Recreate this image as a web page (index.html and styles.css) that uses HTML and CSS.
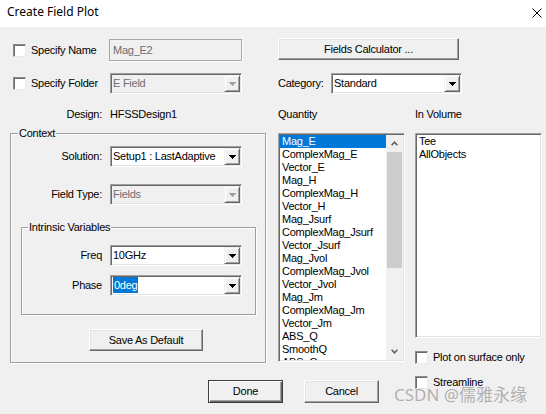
FILE: index.html
```html
<!DOCTYPE html>
<html>
<head>
<meta charset="utf-8">
<title>Create Field Plot</title>
<link rel="stylesheet" href="styles.css">
</head>
<body>
<div class="window">
  <div class="titlebar">
    <span class="title">Create Field Plot</span>
    <svg class="close" width="10" height="10" viewBox="0 0 10 10"><path d="M0.5 0.5L9.5 9.5M9.5 0.5L0.5 9.5" stroke="#000" stroke-width="1" fill="none"/></svg>
  </div>
  <div class="body">
    <div class="left">
      <div class="row r-name">
        <div class="chkwrap"><span class="chk"></span><span>Specify Name</span></div>
        <div class="edit is-disabled">Mag_E2</div>
      </div>
      <div class="row r-folder">
        <div class="chkwrap"><span class="chk"></span><span>Specify Folder</span></div>
        <div class="combo is-disabled"><span class="val">E Field</span><span class="drop"><svg width="7" height="4" viewBox="0 0 7 4"><path d="M0 0h7v1h-1v1h-1v1h-1v1h-1v-1h-1v-1h-1v-1h-1z"/></svg></span></div>
      </div>
      <div class="row r-design"><span class="lbl lw92">Design:</span><span>HFSSDesign1</span></div>
      <div class="group context">
        <div class="legend">Context</div>
        <div class="row r-solution"><span class="lbl lw91">Solution:</span>
          <div class="combo"><span class="val">Setup1 : LastAdaptive</span><span class="drop"><svg width="7" height="4" viewBox="0 0 7 4"><path d="M0 0h7v1h-1v1h-1v1h-1v1h-1v-1h-1v-1h-1v-1h-1z"/></svg></span></div>
        </div>
        <div class="row r-ftype"><span class="lbl lw91">Field Type:</span>
          <div class="combo is-disabled"><span class="val">Fields</span><span class="drop"><svg width="7" height="4" viewBox="0 0 7 4"><path d="M0 0h7v1h-1v1h-1v1h-1v1h-1v-1h-1v-1h-1v-1h-1z"/></svg></span></div>
        </div>
        <div class="group intrinsic">
          <div class="legend">Intrinsic Variables</div>
          <div class="row r-freq"><span class="lbl lw80">Freq</span>
            <div class="combo"><span class="val">10GHz</span><span class="drop"><svg width="7" height="4" viewBox="0 0 7 4"><path d="M0 0h7v1h-1v1h-1v1h-1v1h-1v-1h-1v-1h-1v-1h-1z"/></svg></span></div>
          </div>
          <div class="row r-phase"><span class="lbl lw80">Phase</span>
            <div class="combo"><span class="val"><span class="hl">0deg</span></span><span class="drop"><svg width="7" height="4" viewBox="0 0 7 4"><path d="M0 0h7v1h-1v1h-1v1h-1v1h-1v-1h-1v-1h-1v-1h-1z"/></svg></span></div>
          </div>
        </div>
        <button class="btn save">Save As Default</button>
      </div>
    </div>

    <div class="right">
      <button class="btn calc">Fields Calculator ...</button>
      <div class="row r-cat"><span class="cat-lbl">Category:</span>
        <div class="combo cat"><span class="val">Standard</span><span class="drop"><svg width="7" height="4" viewBox="0 0 7 4"><path d="M0 0h7v1h-1v1h-1v1h-1v1h-1v-1h-1v-1h-1v-1h-1z"/></svg></span></div>
      </div>
      <div class="row r-heads"><span class="head-q">Quantity</span><span>In Volume</span></div>
      <div class="lists">
        <div class="list qty">
          <div class="items">
            <div class="item sel">Mag_E</div>
            <div class="item">ComplexMag_E</div>
            <div class="item">Vector_E</div>
            <div class="item">Mag_H</div>
            <div class="item">ComplexMag_H</div>
            <div class="item">Vector_H</div>
            <div class="item">Mag_Jsurf</div>
            <div class="item">ComplexMag_Jsurf</div>
            <div class="item">Vector_Jsurf</div>
            <div class="item">Mag_Jvol</div>
            <div class="item">ComplexMag_Jvol</div>
            <div class="item">Vector_Jvol</div>
            <div class="item">Mag_Jm</div>
            <div class="item">ComplexMag_Jm</div>
            <div class="item">Vector_Jm</div>
            <div class="item">ABS_Q</div>
            <div class="item">SmoothQ</div>
            <div class="item">ABS_Qm</div>
          </div>
          <div class="vscroll">
            <div class="sb-arrow"><svg width="7" height="5" viewBox="0 0 7 5"><path d="M0.6 4.2L3.5 1.2L6.4 4.2" stroke="#606060" stroke-width="1.6" fill="none"/></svg></div>
            <div class="sb-thumb"></div>
            <div class="sb-track"></div>
            <div class="sb-arrow"><svg width="7" height="5" viewBox="0 0 7 5"><path d="M0.6 0.8L3.5 3.8L6.4 0.8" stroke="#606060" stroke-width="1.6" fill="none"/></svg></div>
          </div>
        </div>
        <div class="volcol">
          <div class="list vol">
            <div class="items">
              <div class="item">Tee</div>
              <div class="item">AllObjects</div>
            </div>
          </div>
          <div class="row r-plot"><div class="chkwrap"><span class="chk"></span><span>Plot on surface only</span></div></div>
        </div>
      </div>
    </div>

    <div class="bottom">
      <button class="btn done">Done</button>
      <button class="btn cancel">Cancel</button>
      <div class="chkwrap streamline"><span class="chk"></span><span>Streamline</span></div>
    </div>
  </div>
  <div class="watermark">CSDN @儒雅永缘</div>
</div>
</body>
</html>
```

FILE: styles.css
```css
* { box-sizing: border-box; }
html, body { margin: 0; padding: 0; }
body {
  width: 546px;
  height: 414px;
  overflow: hidden;
  background: #f0f0f0;
  font-family: "Liberation Sans", Arial, sans-serif;
  font-size: 11px;
  letter-spacing: -0.25px;
  line-height: 13px;
  color: #000;
}
.window { position: relative; width: 546px; height: 414px; background: #f0f0f0; }

.titlebar {
  height: 27px;
  background: #fff;
  display: flex;
  justify-content: space-between;
  align-items: flex-start;
  padding: 3px 4px 0 7px;
}
.title { font-family: "Noto Sans", sans-serif; font-size: 12px; letter-spacing: 0; line-height: 17px; }
.close { display: block; margin-top: 5px; width: 10px; height: 10px; }

.body {
  display: grid;
  grid-template-columns: 256px 264px;
  column-gap: 12px;
  padding-left: 10px;
  align-items: start;
}
.left, .right { display: flex; flex-direction: column; }
.row { display: flex; align-items: center; }

.chkwrap { display: flex; align-items: center; gap: 5px; }
.chk {
  display: block;
  width: 13px;
  height: 13px;
  background: #fff;
  border: 1px solid;
  border-color: #8a8a8a #e8e8e8 #e8e8e8 #8a8a8a;
  box-shadow: inset 1px 1px #6d6d6d;
}

.r-name { margin-top: 12px; height: 22px; }
.r-folder { margin-top: 12px; height: 21px; }
.r-name .chkwrap, .r-folder .chkwrap { width: 99px; padding-left: 3px; }
.r-folder .combo { margin-left: 1px; }

.edit {
  width: 133px;
  height: 22px;
  padding: 3px 0 0 3px;
  line-height: 14px;
  border: 1px solid #a8a8a8;
  box-shadow: 1px 1px #fff;
}
.edit.is-disabled { background: #f0f0f0; color: #6d6d6d; }

.lbl { text-align: right; margin-right: 8px; flex: none; }
.lw92 { width: 92px; }
.lw91 { width: 91px; }
.lw80 { width: 80px; }
.r-design { margin-top: 14px; height: 13px; }

.combo {
  display: flex;
  width: 132px;
  height: 21px;
  padding: 1px;
  background: #fff;
  border: 1px solid;
  border-color: #a0a0a0 #fff #fff #a0a0a0;
  box-shadow: inset 1px 1px #696969, inset -1px -1px #e3e3e3;
}
.combo .val { flex: 1; padding-left: 1px; line-height: 17px; white-space: nowrap; overflow: hidden; }
.combo .drop {
  width: 16px;
  height: 17px;
  flex: none;
  display: flex;
  align-items: center;
  justify-content: center;
  background: #f0f0f0;
  border: 1px solid;
  border-color: #f0f0f0 #696969 #696969 #f0f0f0;
  box-shadow: inset 1px 1px #fff, inset -1px -1px #a0a0a0;
}
.combo .drop svg { display: block; fill: #000; }
.combo.is-disabled { background: #f0f0f0; color: #6d6d6d; }
.combo.is-disabled .drop svg { fill: #a0a0a0; }
.hl { background: #0078d7; color: #fff; padding: 0 1px; display: inline-block; line-height: 16px; }

.group {
  display: flex;
  flex-direction: column;
  border: 1px solid #a0a0a0;
  box-shadow: inset 1px 1px #fff, 1px 1px #fff;
}
.legend {
  align-self: flex-start;
  margin: -7px 0 0 7px;
  padding: 0 1px;
  height: 13px;
  line-height: 13px;
  background: #f0f0f0;
}
.context { margin-top: 12px; width: 256px; height: 230px; }
.r-solution { margin-top: 6px; }
.r-ftype { margin-top: 17px; }
.intrinsic { margin: 22px 0 0 10px; width: 235px; height: 88px; }
.intrinsic .legend { margin-left: 6px; }
.r-freq { margin-top: 11px; }
.r-phase { margin-top: 9px; }

.btn {
  display: block;
  font: inherit;
  letter-spacing: inherit;
  color: #000;
  padding: 0;
  background: #f0f0f0;
  border: 1px solid;
  border-color: #fff #696969 #696969 #fff;
  box-shadow: inset -1px -1px #a0a0a0, inset 1px 1px #e3e3e3;
  text-align: center;
}
.save { margin: 14px 0 0 78px; width: 114px; height: 22px; }
.calc { margin-top: 11px; width: 181px; height: 22px; }

.r-cat { margin-top: 13px; height: 21px; }
.cat-lbl { width: 53px; }
.combo.cat { width: 131px; }
.r-heads { margin-top: 14px; height: 13px; }
.head-q { width: 137px; }

.lists { display: flex; gap: 10px; margin-top: 12px; }
.list {
  display: flex;
  width: 127px;
  padding: 1px;
  background: #fff;
  border: 1px solid;
  border-color: #a0a0a0 #fff #fff #a0a0a0;
  box-shadow: inset 1px 1px #696969, inset -1px -1px #e3e3e3;
}
.list.qty { height: 229px; }
.list.vol { height: 205px; }
.items { flex: 1; overflow: hidden; }
.item { height: 13px; line-height: 13px; padding-left: 2px; white-space: nowrap; }
.item.sel { background: #0078d7; color: #fff; }

.vscroll { width: 17px; flex: none; display: flex; flex-direction: column; background: #f0f0f0; }
.sb-arrow { height: 17px; display: flex; align-items: center; justify-content: center; }
.sb-arrow svg { display: block; }
.sb-thumb { height: 116px; margin: 0 1px; background: #cdcdcd; }
.sb-track { flex: 1; }

.volcol { display: flex; flex-direction: column; }
.r-plot { margin-top: 13px; height: 13px; }

.bottom {
  grid-column: 1 / -1;
  display: flex;
  align-items: flex-start;
  margin-top: 12px;
}
.done {
  margin: 4px 0 0 198px;
  width: 75px;
  height: 23px;
  border: 1px solid #3c3c3c;
  box-shadow: inset 1px 1px #fff, inset -1px -1px #696969, inset -2px -2px #a0a0a0;
}
.cancel { margin: 4px 0 0 21px; width: 75px; height: 23px; }
.streamline { margin-left: 36px; }

.watermark {
  position: absolute;
  left: 394px;
  top: 385px;
  font-family: "Noto Sans", "Noto Sans CJK SC", sans-serif;
  font-size: 17px;
  line-height: 20px;
  letter-spacing: 0;
  color: rgba(140, 140, 140, 0.65);
  white-space: nowrap;
}
```
